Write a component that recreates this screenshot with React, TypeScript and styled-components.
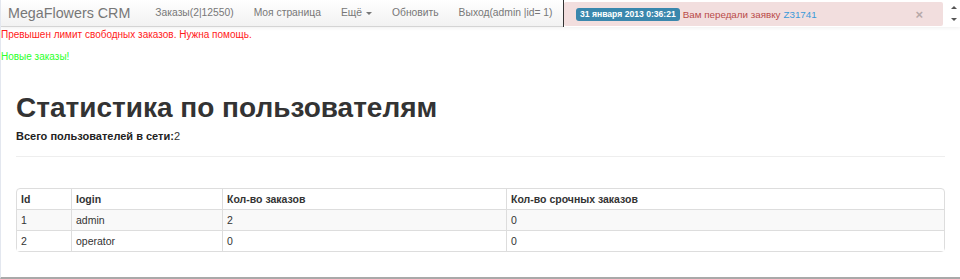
import React from "react";
import styled, { createGlobalStyle } from "styled-components";

const Global = createGlobalStyle`
  html, body { margin: 0; padding: 0; background: #fff; }
  body {
    font-family: "Liberation Sans", Arial, sans-serif;
    font-size: 11px;
    color: #333;
    overflow: hidden;
  }
`;

const Frame = styled.div`
  position: relative;
  width: 960px;
  height: 279px;
  box-sizing: border-box;
  border-left: 1px solid #e3e7ef;
  border-bottom: 2px solid #a9a9a9;
  overflow: hidden;
`;

const Navbar = styled.div`
  height: 26px;
  display: flex;
  align-items: center;
  background: linear-gradient(#ffffff, #f2f2f2);
  border-bottom: 1px solid #d4d4d4;
  box-shadow: 0 1px 4px rgba(0, 0, 0, 0.065);
`;

const Brand = styled.div`
  font-size: 14.3px;
  color: #777;
  padding: 0 15px 0 7px;
  line-height: 26px;
  white-space: nowrap;
`;

const NavItem = styled.div`
  font-size: 10.3px;
  color: #777;
  padding: 0 10px;
  line-height: 26px;
  display: flex;
  align-items: center;
  gap: 4px;
  white-space: nowrap;
`;

const Caret = styled.span`
  display: inline-block;
  width: 0;
  height: 0;
  border-left: 3px solid transparent;
  border-right: 3px solid transparent;
  border-top: 3px solid #777;
  margin-top: 1px;
`;

const Notice = styled.div`
  position: absolute;
  top: 0;
  right: 0;
  width: 397px;
  height: 27px;
  box-sizing: border-box;
  border-left: 1px solid #333;
  background: #fff;
  display: flex;
`;

const Alert = styled.div`
  flex: 1;
  margin: 2px 5px 1px 0;
  background: #f2dede;
  display: flex;
  align-items: center;
  padding-left: 12px;
  font-size: 9.8px;
  color: #b94a48;
  border-radius: 2px;
  white-space: nowrap;
`;

const Badge = styled.span`
  background: #3a87ad;
  color: #fff;
  font-weight: bold;
  font-size: 8.6px;
  padding: 1px 4px;
  border-radius: 3px;
  line-height: 11px;
  margin-right: 3px;
`;

const Link = styled.a`
  color: #3a9ad9;
  margin-left: 3px;
  text-decoration: none;
`;

const Close = styled.span`
  margin-left: auto;
  margin-right: 20px;
  color: #b7a9a9;
  font-size: 13px;
  font-weight: bold;
`;

const Scrollbar = styled.div`
  width: 12px;
  display: flex;
  flex-direction: column;
  justify-content: space-between;
  align-items: center;
  padding: 6px 0;
  background: #fff;
`;

const Arrow = styled.span<{ $up?: boolean }>`
  width: 0;
  height: 0;
  border-left: 3px solid transparent;
  border-right: 3px solid transparent;
  ${(p) => (p.$up ? "border-bottom: 3px solid #555;" : "border-top: 3px solid #555;")}
`;

const Message = styled.div<{ $color: string; $top: number }>`
  color: ${(p) => p.$color};
  font-size: 10px;
  line-height: 14px;
  margin-top: ${(p) => p.$top}px;
`;

const Container = styled.div`
  padding: 0 15px;
`;

const Title = styled.h1`
  margin: 25px 0 0 0;
  font-size: 28px;
  font-weight: bold;
  color: #333;
  line-height: 38px;
`;

const Sub = styled.div`
  margin-top: 2px;
  font-size: 11px;
  line-height: 14px;
  b { color: #222; }
`;

const Rule = styled.hr`
  border: 0;
  border-top: 1px solid #eee;
  margin: 13px 0 0 0;
`;

const Table = styled.table`
  margin-top: 31px;
  width: 100%;
  border-collapse: separate;
  border-spacing: 0;
  border: 1px solid #ddd;
  border-radius: 4px;
  font-size: 10.5px;
  color: #333;
`;

const Th = styled.th<{ $w?: number }>`
  text-align: left;
  font-weight: bold;
  padding: 3px 4px;
  height: 14px;
  line-height: 14px;
  border-left: 1px solid #ddd;
  &:first-child { border-left: 0; }
  ${(p) => (p.$w ? `width: ${p.$w}px;` : "")}
`;

const Tr = styled.tr<{ $striped?: boolean }>`
  background: ${(p) => (p.$striped ? "#f9f9f9" : "#fff")};
`;

const Td = styled.td`
  padding: 3px 4px;
  height: 14px;
  line-height: 14px;
  border-top: 1px solid #ddd;
  border-left: 1px solid #ddd;
  &:first-child { border-left: 0; }
`;

const rows = [
  { id: 1, login: "admin", orders: 2, urgent: 0 },
  { id: 2, login: "operator", orders: 0, urgent: 0 },
];

export default function App() {
  return (
    <>
      <Global />
      <Frame>
        <Navbar>
          <Brand>MegaFlowers CRM</Brand>
          <NavItem>Заказы(2|12550)</NavItem>
          <NavItem>Моя страница</NavItem>
          <NavItem>
            Ещё <Caret />
          </NavItem>
          <NavItem>Обновить</NavItem>
          <NavItem>Выход(admin |id= 1)</NavItem>
        </Navbar>
        <Notice>
          <Alert>
            <Badge>31 января 2013 0:36:21</Badge>
            Вам передали заявку
            <Link href="#">Z31741</Link>
            <Close>×</Close>
          </Alert>
          <Scrollbar>
            <Arrow $up />
            <Arrow />
          </Scrollbar>
        </Notice>
        <Message $color="#ff1a1a" $top={1}>Превышен лимит свободных заказов. Нужна помощь.</Message>
        <Message $color="#2bff2b" $top={8}>Новые заказы!</Message>
        <Container>
          <Title>Статистика по пользователям</Title>
          <Sub>
            <b>Всего пользователей в сети:</b>2
          </Sub>
          <Rule />
          <Table>
            <thead>
              <tr>
                <Th $w={46}>Id</Th>
                <Th $w={142}>login</Th>
                <Th $w={275}>Кол-во заказов</Th>
                <Th>Кол-во срочных заказов</Th>
              </tr>
            </thead>
            <tbody>
              {rows.map((r, i) => (
                <Tr key={r.id} $striped={i % 2 === 0}>
                  <Td>{r.id}</Td>
                  <Td>{r.login}</Td>
                  <Td>{r.orders}</Td>
                  <Td>{r.urgent}</Td>
                </Tr>
              ))}
            </tbody>
          </Table>
        </Container>
      </Frame>
    </>
  );
}
